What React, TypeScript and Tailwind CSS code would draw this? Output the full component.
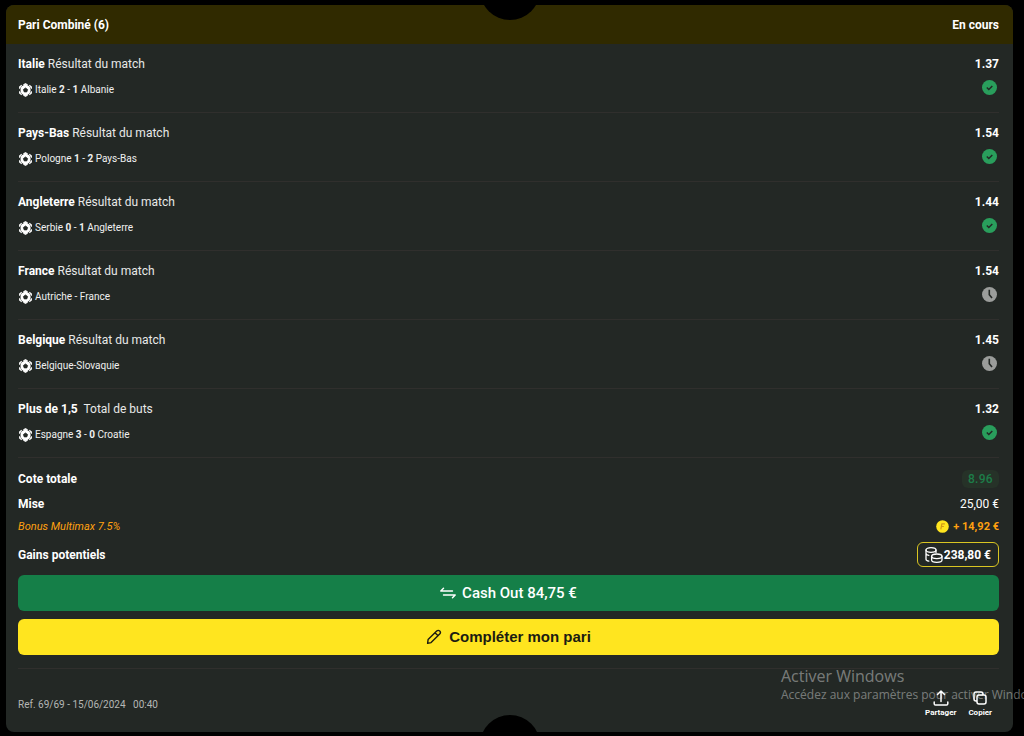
import type { ReactNode } from 'react';

type Status = 'won' | 'pending';

interface Selection {
  pick: string;
  market: string;
  match: ReactNode;
  odds: string;
  status: Status;
}

const selections: Selection[] = [
  { pick: 'Italie', market: 'Résultat du match', match: <>Italie <b>2</b> - <b>1</b> Albanie</>, odds: '1.37', status: 'won' },
  { pick: 'Pays-Bas', market: 'Résultat du match', match: <>Pologne <b>1</b> - <b>2</b> Pays-Bas</>, odds: '1.54', status: 'won' },
  { pick: 'Angleterre', market: 'Résultat du match', match: <>Serbie <b>0</b> - <b>1</b> Angleterre</>, odds: '1.44', status: 'won' },
  { pick: 'France', market: 'Résultat du match', match: <>Autriche - France</>, odds: '1.54', status: 'pending' },
  { pick: 'Belgique', market: 'Résultat du match', match: <>Belgique-Slovaquie</>, odds: '1.45', status: 'pending' },
  { pick: 'Plus de 1,5\u00a0', market: 'Total de buts', match: <>Espagne <b>3</b> - <b>0</b> Croatie</>, odds: '1.32', status: 'won' },
];

function BallIcon() {
  return (
    <svg className="size-[14px] shrink-0" viewBox="0 0 14 14" aria-hidden="true">
      <circle cx="7.5" cy="7" r="5.2" fill="#fff" />
      <path d="M5.500 1.700 7.500.5l2 1.200zM11.400 2.300l2 1.200.1 2zM13.500 8.500l-.1 2-2 1.200zM9.500 12.300l-2 1.200-2-1.200zM3.600 11.700l-2-1.200-.1-2zM1.500 5.500l.1-2 2-1.200z" fill="#fff" stroke="#fff" strokeWidth=".9" strokeLinejoin="round" />
      <path d="m7.500 5 2.100 1.500-.8 2.400H6.200l-.8-2.400z" fill="#232825" stroke="#232825" strokeWidth=".8" />
      <path d="M.6 5.900 3.200 7 .6 8.100zM14.400 5.900 12.600 7l1.800 1.100z" fill="#232825" />
    </svg>
  );
}

function StatusIcon({ status }: { status: Status }) {
  if (status === 'won') {
    return (
      <svg className="size-4" viewBox="0 0 16 16" role="img" aria-label="Gagné">
        <circle cx="8.500" cy="8.500" r="7.500" fill="#299e5c" />
        <path d="m5.800 8.500 2 2 3.500-3.500" fill="none" stroke="#232825" strokeWidth="1.500" />
      </svg>
    );
  }
  return (
    <svg className="size-4" viewBox="0 0 16 16" role="img" aria-label="En attente">
      <circle cx="8.500" cy="8.500" r="7.500" fill="#9b9d9b" />
      <path d="M8.300 3.700V8.700L11 12" fill="none" stroke="#232825" strokeWidth="1.600" />
    </svg>
  );
}

function CoinsIcon() {
  return (
    <svg className="h-4 w-[18px]" viewBox="0 0 18 16" fill="none" stroke="#fff" strokeWidth="1.300" strokeLinecap="round" aria-hidden="true">
      <ellipse cx="6" cy="3" rx="5" ry="2.300" />
      <path d="M1 3v9.200c0 .9 1.200 1.600 2.800 1.900M11 3v2.500M1 6.300c0 1 1.200 1.800 2.800 2.100" />
      <ellipse cx="11.800" cy="9.300" rx="5.200" ry="2.300" />
      <path d="M6.600 9.300V13c0 1.300 2.300 2.300 5.200 2.300S17 14.300 17 13V9.300" />
    </svg>
  );
}

function BonusCoin() {
  return (
    <svg className="size-[13px]" viewBox="0 0 13 13" aria-hidden="true">
      <circle cx="6.500" cy="6.500" r="6.300" fill="#ffe51f" />
      <path d="M4.800 9.400 5.900 3.900h3M5.400 6.500h2.500" fill="none" stroke="#d29a18" strokeWidth="1.200" />
    </svg>
  );
}

function SwapIcon() {
  return (
    <svg className="h-3 w-4" viewBox="0 0 16 12" fill="none" stroke="#fff" strokeWidth="1.400" strokeLinecap="round" strokeLinejoin="round" aria-hidden="true">
      <path d="M3.500 1.200.8 4h11.700M12.500 10.800 15.200 8H3.500" />
    </svg>
  );
}

function PencilIcon() {
  return (
    <svg className="size-4" viewBox="0 0 16 16" fill="none" stroke="#1c1c12" strokeWidth="1.400" strokeLinejoin="round" aria-hidden="true">
      <path d="m1.600 14.400.5-3.800 8.600-8.600c.9-.9 2.100-.9 3 0s.9 2.100 0 3l-8.600 8.600zM9 3.700l3.100 3.100" />
    </svg>
  );
}

function ShareIcon() {
  return (
    <svg className="size-4" viewBox="0 0 16 16" fill="none" stroke="#fff" strokeWidth="1.500" strokeLinecap="round" strokeLinejoin="round" aria-hidden="true">
      <path d="M8 11.500V1M4.500 4.500 8 1l3.500 3.500M1.200 12v1.800c0 .8.500 1.300 1.300 1.300h11c.8 0 1.300-.5 1.300-1.300V12" />
    </svg>
  );
}

function CopyIcon() {
  return (
    <svg className="size-4" viewBox="0 0 16 16" fill="none" stroke="#fff" strokeWidth="1.500" strokeLinejoin="round" aria-hidden="true">
      <rect x="5" y="5" width="9" height="9" rx="2" />
      <path d="M5 11H4c-1.100 0-2-.9-2-2V4c0-1.100.9-2 2-2h5c1.100 0 2 .9 2 2v1" />
    </svg>
  );
}

export default function App() {
  return (
    <div className="relative min-h-screen overflow-hidden bg-black pt-[5px] pr-[11px] pb-1 pl-[6px] font-['Roboto',sans-serif] text-[12px] leading-4 text-white">
      <main className="relative overflow-hidden rounded-lg bg-[#232825]">
        <div className="absolute -top-[45px] left-1/2 size-[60px] -translate-x-1/2 rounded-full bg-black" />
        <div className="absolute -bottom-[43px] left-1/2 size-[60px] -translate-x-1/2 rounded-full bg-black" />

        <header className="flex h-[39px] items-center justify-between bg-[#302a00] pr-[14px] pl-3 font-bold">
          <h1>Pari Combiné (6)</h1>
          <span>En cours</span>
        </header>

        <div className="pr-[14px] pl-3">
          <ul>
            {selections.map((s) => (
              <li key={s.pick} className="flex justify-between border-b border-[#302f2d] pt-[11px] pb-[14px]">
                <div>
                  <p className="leading-[18px]">
                    <b>{s.pick}</b> <span className="text-[#e8e9e8]">{s.market}</span>
                  </p>
                  <p className="mt-[9px] flex items-center gap-[3px] text-[10px] text-[#f0f0f0]">
                    <BallIcon />
                    <span>{s.match}</span>
                  </p>
                </div>
                <div className="flex flex-col items-end">
                  <span className="leading-[18px] font-bold">{s.odds}</span>
                  <span className="mt-1.5 mr-0.5">
                    <StatusIcon status={s.status} />
                  </span>
                </div>
              </li>
            ))}
          </ul>

          <dl className="pt-[11px]">
            <div className="flex h-[19px] items-center justify-between">
              <dt className="font-bold">Cote totale</dt>
              <dd className="rounded-md bg-[#263228] px-1.5 py-px font-medium tracking-wide text-[#1d7d48]">8.96</dd>
            </div>
            <div className="mt-1.5 flex h-[19px] items-center justify-between">
              <dt className="font-bold">Mise</dt>
              <dd>25,00 €</dd>
            </div>
            <div className="mt-1 flex h-[19px] items-center justify-between text-[11px] text-[#ffa010]">
              <dt className="italic">Bonus Multimax 7.5%</dt>
              <dd className="flex items-center gap-1 font-bold">
                <BonusCoin />
                <span>+ 14,92 €</span>
              </dd>
            </div>
            <div className="mt-1.5 flex h-[25px] items-center justify-between font-bold">
              <dt>Gains potentiels</dt>
              <dd className="flex h-[25px] items-center gap-px rounded-md border border-[#d9c522] px-[7px]">
                <CoinsIcon />
                <span>238,80 €</span>
              </dd>
            </div>
          </dl>

          <div className="mt-2 flex flex-col gap-2">
            <button type="button" className="flex h-9 items-center justify-center gap-1.5 rounded-md bg-[#157f48] text-[15px] font-medium">
              <SwapIcon />
              Cash Out 84,75 €
            </button>
            <button type="button" className="flex h-9 items-center justify-center gap-[7px] rounded-md bg-[#ffe51f] font-['Liberation_Sans',sans-serif] text-[15px] font-bold text-[#1c1c12]">
              <PencilIcon />
              Compléter mon pari
            </button>
          </div>

          <footer className="mt-[13px] flex items-center justify-between border-t border-[#302f2d] pt-[21px] pb-[13px]">
            <p className="text-[10px] whitespace-pre text-[#b5b7b5]">Ref. 69/69 - 15/06/2024   00:40</p>
            <div className="flex gap-3 pr-[7px] text-[8px] leading-3 font-bold">
              <button type="button" className="flex flex-col items-center gap-px">
                <ShareIcon />
                Partager
              </button>
              <button type="button" className="flex flex-col items-center gap-px">
                <CopyIcon />
                Copier
              </button>
            </div>
          </footer>
        </div>
      </main>

      <div className="pointer-events-none absolute bottom-[33px] left-[781px] whitespace-nowrap font-['Open_Sans',sans-serif] text-white/40">
        <p className="text-[16px] leading-5">Activer Windows</p>
        <p className="text-[12px] leading-[17px]">Accédez aux paramètres pour activer Windows</p>
      </div>
    </div>
  );
}
